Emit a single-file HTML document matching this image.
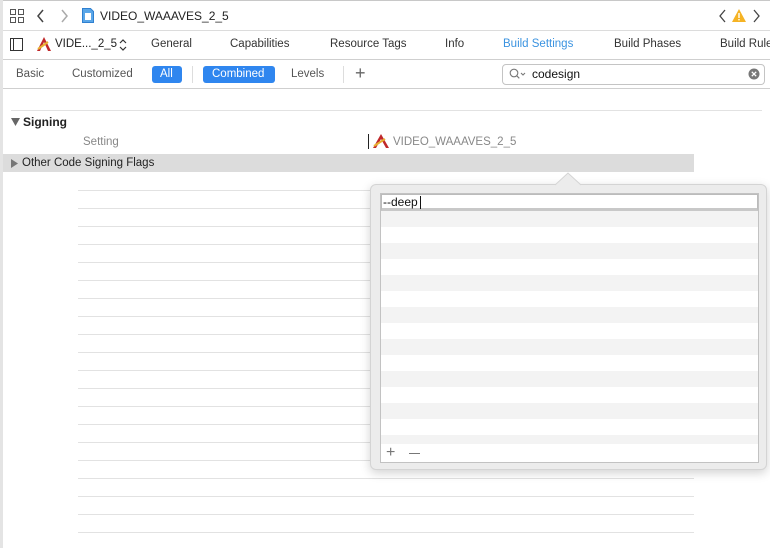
<!DOCTYPE html>
<html><head><style>
*{margin:0;padding:0;box-sizing:border-box}
body{width:770px;height:548px;overflow:hidden;background:#fff;font-family:"Liberation Sans",sans-serif;font-size:11px;color:#333;position:relative}
.a{position:absolute}
.t{position:absolute;white-space:nowrap}
</style></head><body>
<div class="a" style="left:0;top:0;width:770px;height:1px;background:#c8c8c8"></div>
<div class="a" style="left:0;top:0;width:3px;height:548px;background:#e4e4e4"></div>
<svg class="a" style="left:10px;top:9px" width="14" height="14"><g fill="none" stroke="#555" stroke-width="1"><rect x="0.5" y="0.5" width="5" height="5"/><rect x="8.5" y="0.5" width="5" height="5"/><rect x="0.5" y="8.5" width="5" height="5"/><rect x="8.5" y="8.5" width="5" height="5"/></g></svg>
<svg class="a" style="left:37px;top:9px" width="8" height="14"><path d="M6 1L1 7l5 6" fill="none" stroke="#444" stroke-width="1.5"/></svg>
<svg class="a" style="left:61px;top:9px" width="8" height="14"><path d="M1 1l5 6-5 6" fill="none" stroke="#aaa" stroke-width="1.5"/></svg>
<svg class="a" style="left:82px;top:8px" width="12" height="15"><path d="M0.5 0.5h8l3 3v11h-11z" fill="#5aa6e8" stroke="#2f80d0"/><rect x="3" y="5" width="6" height="7" fill="#fff"/></svg>
<div class="t" style="left:100px;top:9px;font-size:12px;color:#222">VIDEO_WAAAVES_2_5</div>
<svg class="a" style="left:719px;top:9px" width="8" height="14"><path d="M6 1L1 7l5 6" fill="none" stroke="#444" stroke-width="1.3"/></svg>
<svg class="a" style="left:732px;top:9px" width="14" height="13"><path d="M7 0L14 13H0z" fill="#f5b324"/><rect x="6.3" y="4" width="1.4" height="5" fill="#fff"/><rect x="6.3" y="10" width="1.4" height="1.4" fill="#fff"/></svg>
<svg class="a" style="left:753px;top:9px" width="8" height="14"><path d="M1 1l5 6-5 6" fill="none" stroke="#444" stroke-width="1.3"/></svg>
<div class="a" style="left:3px;top:30px;width:767px;height:1px;background:#dcdcdc"></div>
<svg class="a" style="left:10px;top:38px" width="13" height="13"><rect x="0.5" y="0.5" width="12" height="12" fill="none" stroke="#333"/><rect x="3" y="1" width="1" height="11" fill="#333"/></svg>
<svg class="a" style="left:36px;top:37px" width="16" height="15"><path d="M8 0L1 14h3l4-9 4 9h3z" fill="#c0282a"/><path d="M2 12l10-7" stroke="#e8b030" stroke-width="2"/></svg>
<div class="t" style="left:55px;top:38px;font-size:11.5px;color:#222">VIDE..._2_5</div>
<svg class="a" style="left:119px;top:39px" width="8" height="12"><path d="M1 4l3-3 3 3M1 8l3 3 3-3" fill="none" stroke="#333" stroke-width="1.2"/></svg>
<div class="t" style="left:151px;top:38px;font-size:11.5px;color:#333">General</div>
<div class="t" style="left:230px;top:38px;font-size:11.5px;color:#333">Capabilities</div>
<div class="t" style="left:330px;top:38px;font-size:11.5px;color:#333">Resource Tags</div>
<div class="t" style="left:445px;top:38px;font-size:11.5px;color:#333">Info</div>
<div class="t" style="left:503px;top:38px;font-size:11.5px;color:#3b93e0">Build Settings</div>
<div class="t" style="left:614px;top:38px;font-size:11.5px;color:#333">Build Phases</div>
<div class="t" style="left:720px;top:38px;font-size:11.5px;color:#333">Build Rules</div>
<div class="a" style="left:3px;top:59px;width:767px;height:1px;background:#cfcfcf"></div>
<div class="t" style="left:16px;top:68px;font-size:11.5px;color:#555">Basic</div>
<div class="t" style="left:72px;top:68px;font-size:11.5px;color:#555">Customized</div>
<div class="a" style="left:152px;top:66px;width:30px;height:17px;background:#2f86ef;border-radius:3px"></div>
<div class="t" style="left:160px;top:68px;font-size:11.5px;color:#fff">All</div>
<div class="a" style="left:192px;top:66px;width:1px;height:17px;background:#ddd"></div>
<div class="a" style="left:203px;top:66px;width:72px;height:17px;background:#2f86ef;border-radius:3px"></div>
<div class="t" style="left:212px;top:68px;font-size:11.5px;color:#fff">Combined</div>
<div class="t" style="left:291px;top:68px;font-size:11.5px;color:#555">Levels</div>
<div class="a" style="left:343px;top:66px;width:1px;height:17px;background:#ddd"></div>
<div class="t" style="left:355px;top:63px;font-size:18px;color:#666;font-weight:300">+</div>
<div class="a" style="left:502px;top:64px;width:263px;height:21px;border:1px solid #c4c4c4;border-radius:4px;background:#fff"></div>
<svg class="a" style="left:509px;top:68px" width="18" height="12"><circle cx="5" cy="5" r="3.8" fill="none" stroke="#777" stroke-width="1.1"/><path d="M7.8 7.8l2.5 2.5M12 5l2 2 2-2" fill="none" stroke="#777" stroke-width="1.1"/></svg>
<div class="t" style="left:532px;top:67px;font-size:12px;color:#111">codesign</div>
<svg class="a" style="left:748px;top:68px" width="12" height="12"><circle cx="6" cy="6" r="5.5" fill="#777"/><path d="M3.8 3.8l4.4 4.4M8.2 3.8l-4.4 4.4" stroke="#fff" stroke-width="1.3"/></svg>
<div class="a" style="left:3px;top:88px;width:767px;height:1px;background:#cfcfcf"></div>
<div class="a" style="left:11px;top:110px;width:751px;height:1px;background:#e2e2e2"></div>
<svg class="a" style="left:11px;top:118px" width="10" height="9"><path d="M0 0h9L4.5 8z" fill="#666"/></svg>
<div class="t" style="left:23px;top:115px;font-size:12px;font-weight:bold;color:#222">Signing</div>
<div class="t" style="left:83px;top:136px;font-size:11.5px;color:#888">Setting</div>
<div class="a" style="left:368px;top:134px;width:1px;height:15px;background:#222"></div>
<svg class="a" style="left:372px;top:134px" width="18" height="15"><path d="M9 0L1 14h3l5-9 5 9h3z" fill="#c0282a"/><path d="M2 12l11-7" stroke="#e8b030" stroke-width="2"/></svg>
<div class="t" style="left:393px;top:136px;font-size:11.5px;color:#888">VIDEO_WAAAVES_2_5</div>
<div class="a" style="left:3px;top:154px;width:691px;height:18px;background:#dcdcdc"></div>
<svg class="a" style="left:11px;top:159px" width="8" height="9"><path d="M0 0v9l7-4.5z" fill="#777"/></svg>
<div class="t" style="left:22px;top:157px;font-size:11.5px;color:#222">Other Code Signing Flags</div>
<div class="a" style="left:78px;top:190px;width:616px;height:343px;background:repeating-linear-gradient(#e2e2e2 0 1px,transparent 1px 18px)"></div>
<div class="a" style="left:370px;top:184px;width:397px;height:286px;background:#ececec;border:1px solid #d4d4d4;border-radius:6px;box-shadow:0 3px 10px rgba(0,0,0,0.18)"></div>
<svg class="a" style="left:555px;top:172px" width="28" height="14"><path d="M0 13L13 1l13 12" fill="#ececec" stroke="#d4d4d4"/></svg>
<div class="a" style="left:380px;top:193px;width:379px;height:270px;background:#fff;border:1px solid #c2c2c2"></div>
<div class="a" style="left:381px;top:211px;width:377px;height:233px;background:repeating-linear-gradient(#f3f3f3 0 16px,#fff 16px 32px)"></div>
<div class="a" style="left:381px;top:194px;width:377px;height:17px;background:#fff;border:1px solid #bbb;border-bottom:3px solid #c8c8c8"></div>
<div class="t" style="left:383px;top:195px;font-size:12px;color:#111">--deep</div>
<div class="a" style="left:420px;top:196px;width:1px;height:13px;background:#111"></div>
<div class="t" style="left:386px;top:444px;font-size:16px;color:#777;font-weight:300">+</div>
<div class="a" style="left:409px;top:453px;width:11px;height:1px;background:#777"></div>
</body></html>
